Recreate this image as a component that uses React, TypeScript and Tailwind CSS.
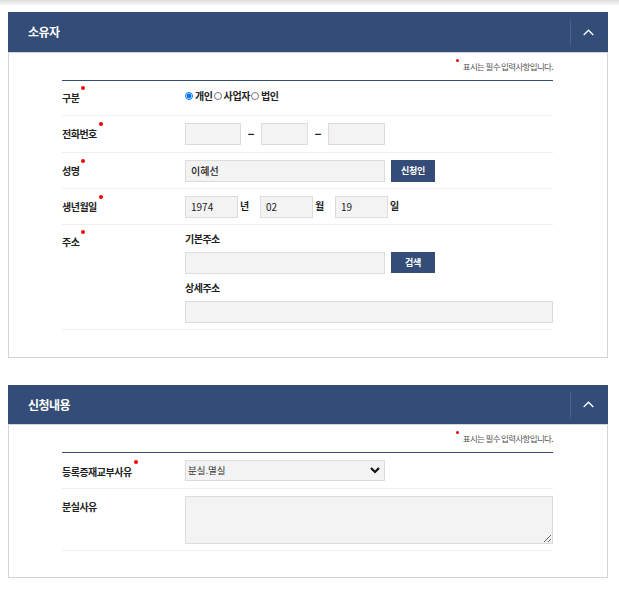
import React from "react";

const inputCls = "h-[22px] bg-[#f3f3f3] border-[1.5px] border-[#dcdcdc] px-[5px] text-[10px] text-[#222] outline-none";

function Dot() {
  return <span className="absolute right-[-6px] top-[-5px] w-[4px] h-[4px] rounded-full bg-[#f00000]" />;
}

function Label({ children, req = true, cls = "" }: { children: React.ReactNode; req?: boolean; cls?: string }) {
  return (
    <div className={"w-[123px] shrink-0 text-[10px] font-bold text-[#222] tracking-[-0.5px] leading-[14px] " + cls}>
      <span className="relative inline-block">
        {children}
        {req && <Dot />}
      </span>
    </div>
  );
}

function Header({ title, h }: { title: string; h: string }) {
  return (
    <div className={"bg-[#344d78] flex items-center justify-between " + h}>
      <h2 className="pl-[20px] text-[12px] font-bold text-white tracking-[-0.5px]">{title}</h2>
      <div className="h-[27px] w-[38px] border-l border-[#4a628a] flex items-center justify-center">
        <svg width="11" height="7" viewBox="0 0 11 7" fill="none" className="mr-[3px]">
          <path d="M0.7 6 L5.5 1.2 L10.3 6" stroke="#fff" strokeWidth="1.3" />
        </svg>
      </div>
    </div>
  );
}

function Note() {
  return (
    <div className="h-[27px] flex justify-end items-start pt-[7px]">
      <span className="relative inline-block text-[8.5px] leading-[12px] text-[#555] tracking-[-0.65px]">
        <span className="absolute left-[-7px] top-[-1px] w-[3px] h-[3px] rounded-full bg-[#f00000]" />
        표시는 필수 입력사항입니다.
      </span>
    </div>
  );
}

function Btn({ children, h = "h-[22px]" }: { children: React.ReactNode; h?: string }) {
  return (
    <button className={"w-[44px] ml-[6px] bg-[#344d78] text-white text-[9px] font-bold tracking-[-0.3px] " + h}>
      {children}
    </button>
  );
}

function Radio({ label, checked }: { label: string; checked?: boolean }) {
  return (
    <label className="flex items-center">
      <input type="radio" name="kind" defaultChecked={checked} className="w-[8px] h-[8px] m-0 mr-[2px] accent-[#0075ff]" />
      <span className="text-[10px] font-bold text-[#222] tracking-[-0.4px]">{label}</span>
    </label>
  );
}

function Unit({ children, w }: { children: React.ReactNode; w: string }) {
  return <span className={"text-[10px] font-bold text-[#222] text-left pl-[2px] pb-[2px] " + w}>{children}</span>;
}

function Dash() {
  return <span className="w-[20px] text-center text-[13px] leading-[13px] font-bold text-[#222] pb-[4px]">–</span>;
}

export default function App() {
  return (
    <div className="w-[619px] h-[589px] bg-white overflow-hidden" style={{ fontFamily: '"Noto Sans CJK KR", "Noto Sans", sans-serif' }}>
      <div className="h-[12px] bg-gradient-to-b from-[#dcdcdc] via-white via-50% to-white" />
      <section className="ml-[8px] w-[600px]">
        <Header title="소유자" h="h-[40px]" />
        <div className="h-[306px] border border-[#d5d5d5] pl-[53px] pr-[54px]">
          <Note />
          <div className="border-t-[1.5px] border-[#344d78]">
            <div className="h-[35px] flex border-b border-[#eeeeee]">
              <Label cls="pt-[10px]">구분</Label>
              <div className="flex items-start pt-[7px] gap-[1px]">
                <Radio label="개인" checked />
                <Radio label="사업자" />
                <Radio label="법인" />
              </div>
            </div>
            <div className="h-[37px] flex items-center border-b border-[#eeeeee]">
              <Label>전화번호</Label>
              <input className={inputCls + " w-[56px]"} />
              <Dash />
              <input className={inputCls + " w-[47px]"} />
              <Dash />
              <input className={inputCls + " w-[57px]"} />
            </div>
            <div className="h-[36px] flex items-center border-b border-[#eeeeee]">
              <Label cls="pt-[1px]">성명</Label>
              <input className={inputCls + " w-[200px] font-medium"} defaultValue="이혜선" />
              <Btn>신청인</Btn>
            </div>
            <div className="h-[36px] flex items-center border-b border-[#eeeeee]">
              <Label>생년월일</Label>
              <input className={inputCls + " w-[53px]"} defaultValue="1974" />
              <Unit w="w-[22px]">년</Unit>
              <input className={inputCls + " w-[53px]"} defaultValue="02" />
              <Unit w="w-[22px]">월</Unit>
              <input className={inputCls + " w-[53px]"} defaultValue="19" />
              <Unit w="w-[16px]">일</Unit>
            </div>
            <div className="h-[105px] flex border-b border-[#eeeeee]">
              <Label cls="pt-[10px]">주소</Label>
              <div className="flex flex-col">
                <div className="h-[14px] mt-[7px] text-[10px] font-bold text-[#222] tracking-[-0.5px] leading-[14px]">기본주소</div>
                <div className="flex items-start mt-[6px]">
                  <input className={inputCls + " w-[200px]"} />
                  <Btn h="h-[21px]">검색</Btn>
                </div>
                <div className="h-[14px] mt-[7px] text-[10px] font-bold text-[#222] tracking-[-0.5px] leading-[14px]">상세주소</div>
                <input className={inputCls + " w-[368px] mt-[6px]"} />
              </div>
            </div>
          </div>
        </div>
      </section>

      <section className="ml-[8px] w-[600px] mt-[27px]">
        <Header title="신청내용" h="h-[39px]" />
        <div className="h-[154px] border border-[#d5d5d5] pl-[53px] pr-[54px]">
          <Note />
          <div className="border-t-[1.5px] border-[#344d78]">
            <div className="h-[36px] flex items-center border-b border-[#eeeeee]">
              <Label cls="pt-[3px]">등록증재교부사유</Label>
              <div className="relative w-[200px] h-[21px]">
                <select className="block w-full h-full appearance-none bg-[#f3f3f3] border-[1.5px] border-[#dcdcdc] pl-[2px] text-[9.5px] text-[#333] outline-none">
                  <option>분실.멸실</option>
                </select>
                <svg width="10" height="7" viewBox="0 0 10 7" fill="none" className="absolute right-[5px] top-[7px]">
                  <path d="M1 1 L5 5 L9 1" stroke="#111" strokeWidth="2.2" />
                </svg>
              </div>
            </div>
            <div className="h-[62px] flex items-center border-b border-[#eeeeee]">
              <Label cls="self-start pt-[11px]" req={false}>분실사유</Label>
              <textarea className="block w-[368px] h-[48px] bg-[#f3f3f3] border-[1.5px] border-[#dcdcdc] outline-none" />
            </div>
          </div>
        </div>
      </section>
    </div>
  );
}
